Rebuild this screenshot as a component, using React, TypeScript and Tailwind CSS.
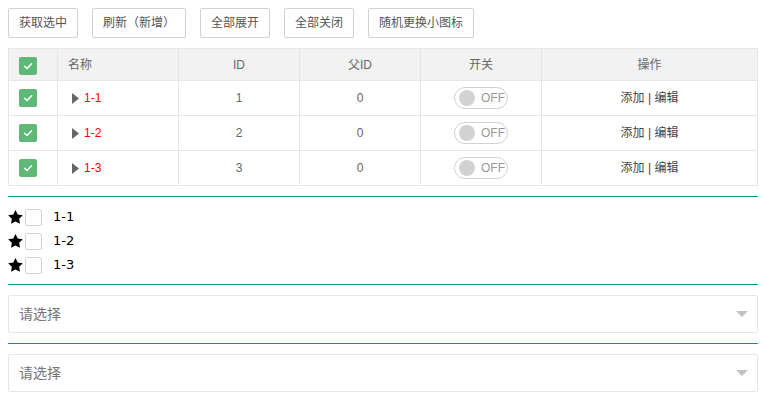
import React from "react";

const FONT = { fontFamily: '"Liberation Sans", "Noto Sans CJK SC", sans-serif' };

function GreenCheck() {
  return (
    <div className="w-[18px] h-[18px] rounded-[2px] bg-[#5FB878] flex items-center justify-center">
      <svg width="12" height="12" viewBox="0 0 12 12">
        <path d="M2.5 6.2 L5 8.4 L9.6 3.8" fill="none" stroke="#ffffff" strokeWidth="1.4" strokeLinecap="round" strokeLinejoin="round" />
      </svg>
    </div>
  );
}

function Switch() {
  return (
    <div className="w-[54px] h-[22px] rounded-full border border-[#d2d2d2] bg-white flex items-center pl-[4px] gap-[6px]">
      <div className="w-[16px] h-[16px] rounded-full bg-[#d2d2d2]" />
      <span className="text-[12px] text-[#999] leading-none">OFF</span>
    </div>
  );
}

function Star() {
  return (
    <svg width="15" height="14" viewBox="2 2 20 19.2">
      <polygon points="12,2 15.09,8.26 22,9.27 17,14.14 18.18,21.02 12,17.77 5.82,21.02 7,14.14 2,9.27 8.91,8.26" fill="#000" />
    </svg>
  );
}

const rows = [
  { name: "1-1", id: "1" },
  { name: "1-2", id: "2" },
  { name: "1-3", id: "3" },
];

const gridCols = "grid grid-cols-[49px_121px_121px_121px_121px_1fr]";

function Select() {
  return (
    <div className="w-[750px] h-[38px] border border-[#e6e6e6] rounded-[2px] bg-white flex items-center justify-between pl-[10px] pr-[9px]">
      <span className="text-[14px] text-[#757575]">请选择</span>
      <svg width="12" height="6" viewBox="0 0 12 6">
        <polygon points="0,0 12,0 6,6" fill="#c2c2c2" />
      </svg>
    </div>
  );
}

export default function App() {
  const buttons = ["获取选中", "刷新（新增）", "全部展开", "全部关闭", "随机更换小图标"];
  return (
    <div className="pl-2 pt-2 bg-white min-h-[401px]" style={FONT}>
      <div className="flex gap-[14px]">
        {buttons.map((b) => (
          <button
            key={b}
            className="h-[30px] px-[10px] border border-[#d2d2d2] rounded-[2px] bg-white text-[12px] text-[#555] leading-none"
          >
            {b}
          </button>
        ))}
      </div>

      <div className="mt-[10px] w-[750px] border border-[#e6e6e6] text-[12px] text-[#666]">
        <div className={`${gridCols} h-[32px] bg-[#f2f2f2] border-b border-[#e6e6e6]`}>
          <div className="border-r border-[#e6e6e6] flex items-center pl-[10px] pt-[2px]">
            <GreenCheck />
          </div>
          <div className="border-r border-[#e6e6e6] flex items-center pl-[10px]">名称</div>
          <div className="border-r border-[#e6e6e6] flex items-center justify-center">ID</div>
          <div className="border-r border-[#e6e6e6] flex items-center justify-center">父ID</div>
          <div className="border-r border-[#e6e6e6] flex items-center justify-center">开关</div>
          <div className="flex items-center justify-center">操作</div>
        </div>
        {rows.map((r, i) => (
          <div
            key={r.id}
            className={`${gridCols} ${i < rows.length - 1 ? "h-[35px] border-b border-[#e6e6e6]" : "h-[34px]"}`}
          >
            <div className="border-r border-[#e6e6e6] flex items-center pl-[10px]">
              <GreenCheck />
            </div>
            <div className="border-r border-[#e6e6e6] flex items-center pl-[14px] gap-[5px]">
              <svg width="7" height="11" viewBox="0 0 7 11">
                <polygon points="0,0 7,5.5 0,11" fill="#666" />
              </svg>
              <span className="text-[#ff0000]">{r.name}</span>
            </div>
            <div className="border-r border-[#e6e6e6] flex items-center justify-center">{r.id}</div>
            <div className="border-r border-[#e6e6e6] flex items-center justify-center">0</div>
            <div className="border-r border-[#e6e6e6] flex items-center justify-center">
              <Switch />
            </div>
            <div className="flex items-center justify-center text-[#444]">添加 | 编辑</div>
          </div>
        ))}
      </div>

      <div className="mt-[10px] w-[750px] h-px bg-[#009688]" />

      <div className="mt-[8px] flex flex-col">
        {rows.map((r) => (
          <div key={r.id} className="h-[24px] flex items-center">
            <Star />
            <div className="ml-[2px] w-[17px] h-[17px] border border-[#d2d2d2] rounded-[2px] bg-white" />
            <span className="ml-[11px] text-[13px] text-black" style={{ fontFamily: '"DejaVu Sans", sans-serif' }}>
              {r.name}
            </span>
          </div>
        ))}
      </div>

      <div className="mt-[7px] w-[750px] h-px bg-[#009688]" />
      <div className="mt-[10px]">
        <Select />
      </div>
      <div className="mt-[10px] w-[750px] h-px bg-[#009688]" />
      <div className="mt-[10px]">
        <Select />
      </div>
    </div>
  );
}
